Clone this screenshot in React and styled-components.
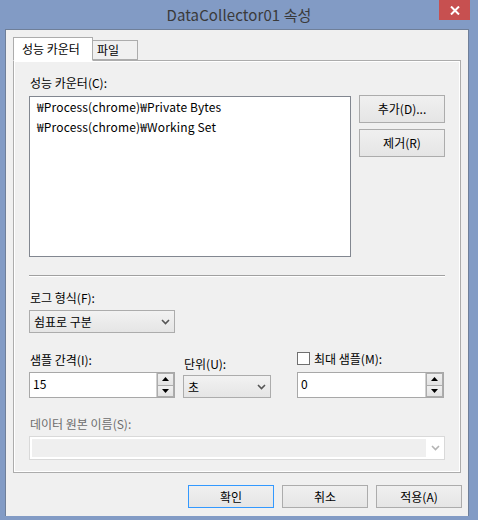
import React from 'react'
import styled, { createGlobalStyle, css } from 'styled-components'

const GlobalStyle = createGlobalStyle`
    html, body {
        margin: 0;
        padding: 0;
        background: #829bc5;
    }
    body {
        font-family: 'Noto Sans CJK KR', 'Noto Sans', sans-serif;
        font-size: 12px;
        color: #000000;
    }
`

const Window = styled.div`
    width: 478px;
    height: 520px;
    background: #829bc5;
    display: flex;
    flex-direction: column;
    box-sizing: border-box;
`

const TitleBar = styled.div`
    height: 29px;
    display: grid;
    grid-template-columns: 1fr auto 1fr;
    align-items: start;
`

const Title = styled.div`
    grid-column: 2;
    font-size: 15px;
    line-height: 29px;
    color: #3a3a3a;
    letter-spacing: 0.1px;
`

const CloseButton = styled.div`
    grid-column: 3;
    justify-self: end;
    width: 31px;
    height: 20px;
    margin-right: 8px;
    background: #c75050;
    display: flex;
    align-items: center;
    justify-content: center;
`

const Client = styled.div`
    margin: 0 9px 0 5px;
    height: 487px;
    border: 1px solid #6f7f99;
    border-bottom: none;
    background: #f0f0f0;
    box-sizing: border-box;
    padding: 8px 7px 0 7px;
    display: flex;
    flex-direction: column;
`

const TabStrip = styled.div`
    display: flex;
    align-items: flex-end;
    height: 22px;
`

const Tab = styled.div`
    box-sizing: border-box;
    border: 1px solid #acacac;
    background: #f0f0f0;
    height: 20px;
    padding: 0 4px;
    line-height: 18px;
    margin-left: -1px;
    ${props => props.$active && css`
        position: relative;
        z-index: 1;
        background: #ffffff;
        border-bottom-color: #ffffff;
        height: 24px;
        margin-bottom: -1px;
        margin-left: 0;
        padding: 0 8px;
        line-height: 22px;
    `}
    ${props => props.$width && css`
        width: ${props.$width}px;
    `}
`

const Panel = styled.div`
    box-sizing: border-box;
    width: 448px;
    height: 413px;
    border: 1px solid #acacac;
    box-shadow: inset 0 0 0 1px #ffffff;
    padding: 14px 15px 0 15px;
    display: flex;
    flex-direction: column;
`

const CounterGrid = styled.div`
    display: grid;
    grid-template-columns: 322px 86px;
    column-gap: 8px;
    row-gap: 5px;
`

const Label = styled.div`
    line-height: 16px;
    height: 16px;
    white-space: nowrap;
    color: ${props => (props.$disabled ? '#6d6d6d' : '#000000')};
    margin-top: ${props => props.$top || 0}px;
    padding-left: 1px;
`

const ListBox = styled.div`
    grid-column: 1;
    box-sizing: border-box;
    height: 161px;
    background: #ffffff;
    border: 1px solid #828790;
    padding: 0 7px;
`

const ListItem = styled.div`
    line-height: 20px;
    height: 20px;
    white-space: nowrap;
    letter-spacing: 0.15px;
`

const SideButtons = styled.div`
    display: flex;
    flex-direction: column;
    gap: 6px;
    margin-top: -1px;
`

const Button = styled.div`
    box-sizing: border-box;
    width: 86px;
    height: ${props => props.$height || 23}px;
    border: 1px solid ${props => (props.$default ? '#3399ff' : '#acacac')};
    background: linear-gradient(#f0f0f0, #e5e5e5);
    display: flex;
    align-items: center;
    justify-content: center;
    line-height: 16px;
    white-space: nowrap;
`

const Separator = styled.div`
    margin-top: 18px;
    height: 0;
    border-top: 1px solid #a0a0a0;
    border-bottom: 1px solid #ffffff;
`

const Field = styled.div`
    display: flex;
    flex-direction: column;
`

const Combo = styled.div`
    box-sizing: border-box;
    width: ${props => props.$width}px;
    height: 23px;
    margin-top: ${props => props.$top || 4}px;
    border: 1px solid #acacac;
    background: linear-gradient(#f2f2f2, #e5e5e5);
    display: flex;
    align-items: center;
    justify-content: space-between;
    padding: 0 4px 0 4px;
    line-height: 16px;
`

const DisabledCombo = styled.div`
    box-sizing: border-box;
    height: 24px;
    margin-top: 4px;
    border: 1px solid #d9d9d9;
    background: #ffffff;
    display: flex;
    align-items: stretch;
    padding: 2px 0 2px 2px;
`

const DisabledField = styled.div`
    flex: 1;
    background: #efefef;
`

const ArrowCell = styled.div`
    width: 18px;
    display: flex;
    align-items: center;
    justify-content: center;
`

const Row = styled.div`
    display: grid;
    grid-template-columns: 154px 114px 147px;
    margin-top: 17px;
    align-items: end;
`

const SpinBox = styled.div`
    box-sizing: border-box;
    width: ${props => props.$width}px;
    height: 26px;
    margin-top: 4px;
    border: 1px solid #a8a8a8;
    background: #ffffff;
    display: flex;
`

const SpinText = styled.div`
    flex: 1;
    padding-left: 3px;
    line-height: 22px;
`

const SpinButtons = styled.div`
    width: 17px;
    display: flex;
    flex-direction: column;
    border-left: 1px solid #d0d0d0;
`

const SpinButton = styled.div`
    flex: 1;
    box-sizing: border-box;
    border: 1px solid #acacac;
    margin-top: ${props => (props.$down ? '-1px' : '0')};
    background: linear-gradient(#f0f0f0, #e3e3e3);
    display: flex;
    align-items: center;
    justify-content: center;
`

const CheckRow = styled.div`
    display: flex;
    align-items: center;
    gap: 4px;
    height: 16px;
    margin-bottom: 2px;
`

const CheckBox = styled.div`
    box-sizing: border-box;
    width: 13px;
    height: 13px;
    border: 1px solid #707070;
    background: #ffffff;
`

const Footer = styled.div`
    display: flex;
    justify-content: flex-end;
    gap: 8px;
    margin-top: 12px;
    margin-right: -1px;
`

const Chevron = ({ color = '#555555' }) => (
    <svg width="9" height="6" viewBox="0 0 9 6">
        <path d="M1 1 L4.5 4.5 L8 1" fill="none" stroke={color} strokeWidth="1.6" />
    </svg>
)

const Triangle = ({ down }) => (
    <svg width="7" height="4" viewBox="0 0 7 4">
        <path d={down ? 'M0 0 H7 L3.5 4 Z' : 'M0 4 H7 L3.5 0 Z'} fill="#000000" />
    </svg>
)

const Spin = ({ value, width }) => (
    <SpinBox $width={width}>
        <SpinText>{value}</SpinText>
        <SpinButtons>
            <SpinButton><Triangle /></SpinButton>
            <SpinButton $down><Triangle down /></SpinButton>
        </SpinButtons>
    </SpinBox>
)

function App() {
    return (
        <>
            <GlobalStyle />
            <Window>
                <TitleBar>
                    <Title>DataCollector01 속성</Title>
                    <CloseButton>
                        <svg width="10" height="9" viewBox="0 0 10 9">
                            <path d="M1 0.5 L9 8.5 M9 0.5 L1 8.5" stroke="#ffffff" strokeWidth="2" />
                        </svg>
                    </CloseButton>
                </TitleBar>
                <Client>
                    <TabStrip>
                        <Tab $active $width={80}>성능 카운터</Tab>
                        <Tab $width={46}>파일</Tab>
                    </TabStrip>
                    <Panel>
                        <CounterGrid>
                            <Label>성능 카운터(C):</Label>
                            <div />
                            <ListBox>
                                <ListItem>₩Process(chrome)₩Private Bytes</ListItem>
                                <ListItem>₩Process(chrome)₩Working Set</ListItem>
                            </ListBox>
                            <SideButtons>
                                <Button $height={28}>추가(D)...</Button>
                                <Button $height={28}>제거(R)</Button>
                            </SideButtons>
                        </CounterGrid>
                        <Separator />
                        <Label $top={13}>로그 형식(F):</Label>
                        <Combo $width={146}>
                            <span>쉼표로 구분</span>
                            <Chevron />
                        </Combo>
                        <Row>
                            <Field>
                                <Label>샘플 간격(I):</Label>
                                <Spin value="15" width={146} />
                            </Field>
                            <Field>
                                <Label>단위(U):</Label>
                                <Combo $width={88} $top={3}>
                                    <span>초</span>
                                    <Chevron />
                                </Combo>
                            </Field>
                            <Field>
                                <CheckRow>
                                    <CheckBox />
                                    <span>최대 샘플(M):</span>
                                </CheckRow>
                                <Spin value="0" width={147} />
                            </Field>
                        </Row>
                        <Label $top={18} $disabled>데이터 원본 이름(S):</Label>
                        <DisabledCombo>
                            <DisabledField />
                            <ArrowCell>
                                <Chevron color="#b4b4b4" />
                            </ArrowCell>
                        </DisabledCombo>
                    </Panel>
                    <Footer>
                        <Button $default>확인</Button>
                        <Button>취소</Button>
                        <Button>적용(A)</Button>
                    </Footer>
                </Client>
            </Window>
        </>
    )
}

export default App
